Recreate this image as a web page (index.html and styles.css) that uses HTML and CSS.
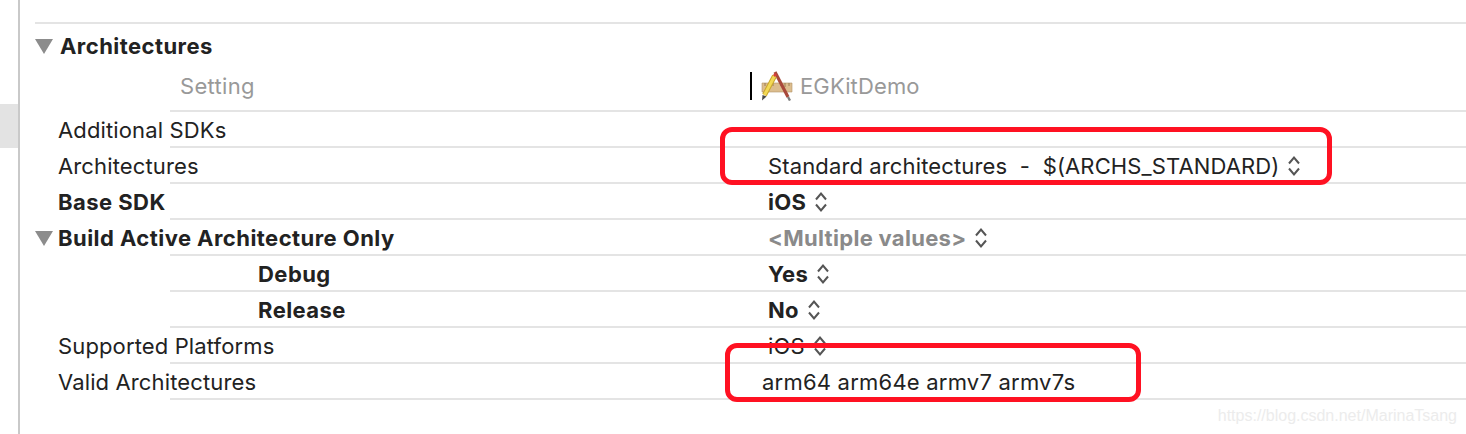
FILE: index.html
```html
<!DOCTYPE html>
<html lang="en">

<head>
    <meta charset="UTF-8">
    <title>Build Settings</title>
    <link rel="stylesheet" href="styles.css">
</head>

<body>
    <aside class="sidebar">
        <div class="sidebar-selected"></div>
    </aside>
    <main class="settings">
        <div class="section-head">
            <span class="triangle"></span>
            <h2>Architectures</h2>
        </div>
        <div class="row head-row">
            <span class="col-title">Setting</span>
            <span class="target">
                <span class="caret"></span>
                <svg class="app-icon" width="32" height="30" viewBox="0 0 32 30">
                    <path d="M1 12 L31 12 L31 21 L1 21 Z" fill="#dcbd8e" stroke="#b3946a" stroke-width="0.6"/>
                    <path d="M4 12v3M8 12v4M12 12v3M20 12v3M24 12v4M28 12v3" stroke="#8a6d47" stroke-width="0.8"/>
                    <path d="M14 1 L27 26" stroke="#a8483a" stroke-width="3.2"/>
                    <path d="M27 26 L29 29.5" stroke="#7d7d7d" stroke-width="2.4"/>
                    <path d="M13.5 5 L3.5 24" stroke="#c9a62c" stroke-width="5"/>
                    <path d="M13.5 5 L3.5 24" stroke="#f3d955" stroke-width="3"/>
                    <path d="M13 3 L15 5" stroke="#d8403a" stroke-width="3"/>
                    <path d="M1.5 24 L1 29.5 L5.6 25.6 Z" fill="#4a4a4a"/>
                </svg>
                <span>EGKitDemo</span>
            </span>
        </div>
        <div class="row">
            <span class="name">Additional SDKs</span>
        </div>
        <div class="row">
            <span class="name">Architectures</span>
            <span class="value">Standard architectures &nbsp;-&nbsp; $(ARCHS_STANDARD)<svg class="stepper"><use href="#updown"/></svg></span>
        </div>
        <div class="row bold">
            <span class="name">Base SDK</span>
            <span class="value">iOS<svg class="stepper"><use href="#updown"/></svg></span>
        </div>
        <div class="row bold">
            <span class="triangle small"></span>
            <span class="name">Build Active Architecture Only</span>
            <span class="value muted">&lt;Multiple values&gt;<svg class="stepper"><use href="#updown"/></svg></span>
        </div>
        <div class="row bold">
            <span class="name sub">Debug</span>
            <span class="value">Yes<svg class="stepper"><use href="#updown"/></svg></span>
        </div>
        <div class="row bold">
            <span class="name sub">Release</span>
            <span class="value">No<svg class="stepper"><use href="#updown"/></svg></span>
        </div>
        <div class="row">
            <span class="name">Supported Platforms</span>
            <span class="value">iOS<svg class="stepper"><use href="#updown"/></svg></span>
        </div>
        <div class="row">
            <span class="name">Valid Architectures</span>
            <span class="value shifted">arm64 arm64e armv7 armv7s</span>
        </div>
    </main>

    <div class="mark mark-top"></div>
    <div class="mark mark-bottom"></div>
    <div class="watermark">https://blog.csdn.net/MarinaTsang</div>

    <svg width="0" height="0" class="defs">
        <symbol id="updown" viewBox="0 0 14 22">
            <path d="M2 8.5 L7 2.5 L12 8.5 M2 13.5 L7 19.5 L12 13.5" fill="none" stroke="#555" stroke-width="2"/>
        </symbol>
    </svg>
</body>

</html>
```

FILE: styles.css
```css
body {
    margin: 0;
    height: 434px;
    overflow: hidden;
    display: flex;
    background-color: #fff;
    font-family: Inter, "Liberation Sans", sans-serif;
    font-size: 22px;
    letter-spacing: 0.13px;
    color: #222;
}

.sidebar {
    width: 18px;
    flex-shrink: 0;
    border-right: 2px solid #c9c9c9;
    padding-top: 104px;
}

.sidebar-selected {
    height: 44px;
    background-color: #e3e3e3;
}

.settings {
    flex: 1;
    padding-top: 22px;
}

.section-head {
    display: flex;
    align-items: center;
    gap: 7px;
    height: 44px;
    padding-bottom: 2px;
    margin-left: 15px;
    border-top: 2px solid #e4e4e4;
}

.section-head h2 {
    margin: 0;
    font-size: 22px;
    font-weight: 700;
    letter-spacing: 0.45px;
}

.triangle {
    width: 0;
    height: 0;
    border-left: 9px solid transparent;
    border-right: 9px solid transparent;
    border-top: 15px solid #8c8c8c;
}

.row {
    display: grid;
    grid-template-columns: 710px 1fr;
    align-items: center;
    height: 36px;
    position: relative;
    background: linear-gradient(#e4e4e4, #e4e4e4) no-repeat 150px 100% / 100% 2px;
}

.head-row {
    height: 32px;
    padding-bottom: 10px;
}

.name {
    padding-left: 38px;
}

.bold .name {
    letter-spacing: 0.45px;
}

.name.sub {
    padding-left: 238px;
}

.value {
    grid-column: 2;
    padding-left: 38px;
    display: flex;
    align-items: center;
}

.value.shifted {
    padding-left: 32px;
    letter-spacing: 0.22px;
}

.muted {
    color: #8a8a8a;
}

.bold {
    font-weight: 700;
    letter-spacing: 0.3px;
}

.triangle.small {
    position: absolute;
    left: 15px;
    top: 11px;
}

.col-title {
    padding-left: 160px;
    letter-spacing: 0.3px;
    color: #999;
}

.target {
    display: flex;
    align-items: center;
    padding-left: 20px;
    color: #999;
}

.caret {
    width: 2px;
    height: 28px;
    background-color: #000;
    margin-right: 9px;
}

.app-icon {
    margin-right: 7px;
}

.stepper {
    width: 14px;
    height: 22px;
    margin-left: 8px;
}

.defs {
    position: absolute;
}

/* annotations drawn over the screenshot */
.mark {
    position: absolute;
    border: 5px solid #ff1122;
    border-radius: 12px;
    box-sizing: border-box;
}

.mark-top {
    left: 720px;
    top: 127px;
    width: 612px;
    height: 58px;
}

.mark-bottom {
    left: 725px;
    top: 343px;
    width: 416px;
    height: 59px;
}

.watermark {
    position: absolute;
    right: 9px;
    top: 407px;
    font-family: "Liberation Sans", sans-serif;
    font-size: 16px;
    letter-spacing: 0;
    color: #ececec;
}
```
